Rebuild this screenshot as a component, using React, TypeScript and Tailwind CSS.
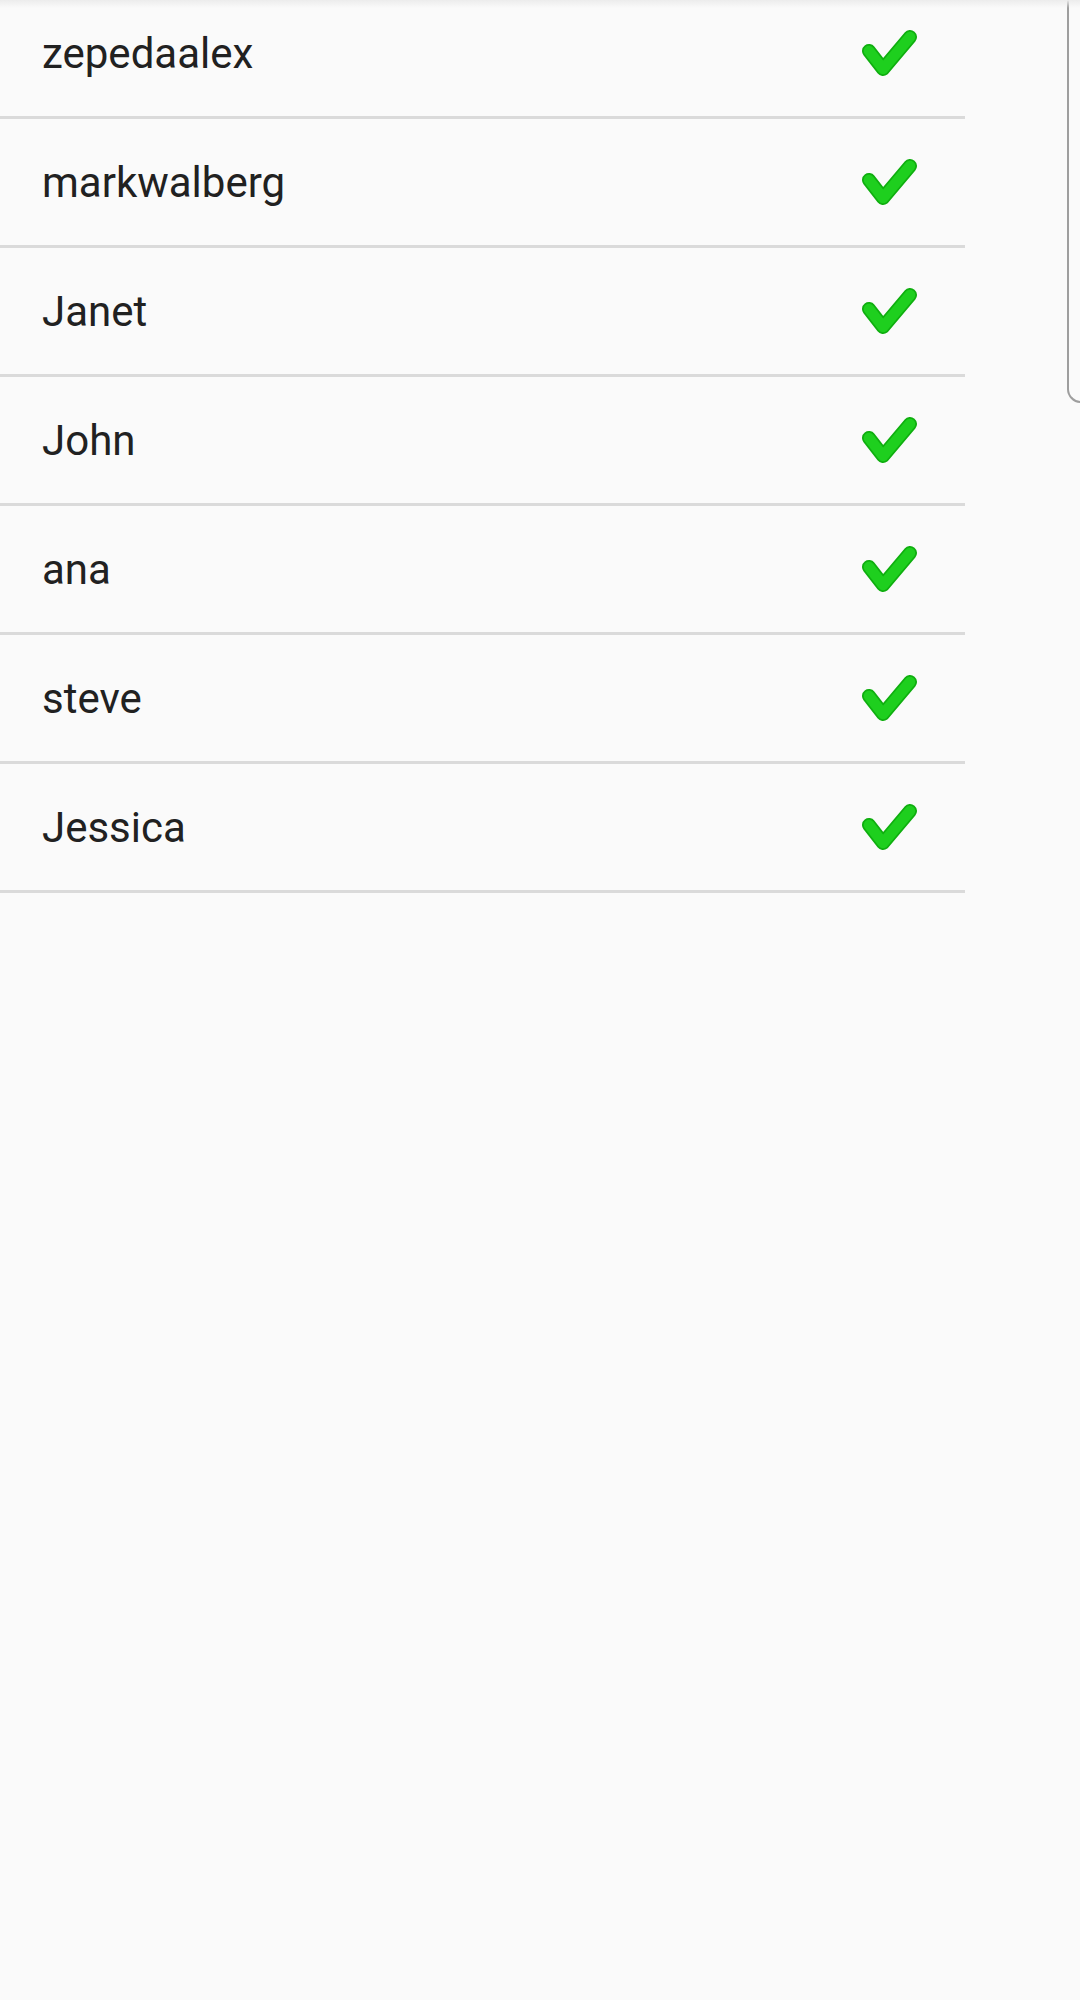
import React from "react";

const names = ["zepedaalex", "markwalberg", "Janet", "John", "ana", "steve", "Jessica"];

function Check() {
  return (
    <svg width="56" height="50" viewBox="0 0 56 50" fill="none">
      <polyline points="8,23 22,41 49,9" stroke="#0fae0f" strokeWidth="14" strokeLinecap="round" strokeLinejoin="round" />
      <polyline points="8,23 22,41 49,9" stroke="#1ecf1e" strokeWidth="10.5" strokeLinecap="round" strokeLinejoin="round" />
    </svg>
  );
}

export default function App() {
  return (
    <div className="relative w-[1080px] h-[2000px] overflow-hidden bg-[#fafafa]" style={{ fontFamily: "Roboto, 'Liberation Sans', sans-serif" }}>
      <div className="-mt-[10px] w-[965px]">
        {names.map((n) => (
          <div key={n} className="border-b-[3px] border-[#dadada]">
            <div className="h-[126px] flex items-center justify-between pl-[42px] pr-[48px]">
              <span className="text-[42px] text-[#212121] leading-none pt-[2px]">{n}</span>
              <Check />
            </div>
          </div>
        ))}
      </div>
      <div className="absolute left-[1067px] top-[-20px] w-[40px] h-[423px] border-l-2 border-b-2 border-[#9e9e9e] rounded-bl-[14px]" />
      <div className="absolute left-0 top-0 w-full h-[8px] bg-gradient-to-b from-[#ececec] to-transparent" />
    </div>
  );
}
